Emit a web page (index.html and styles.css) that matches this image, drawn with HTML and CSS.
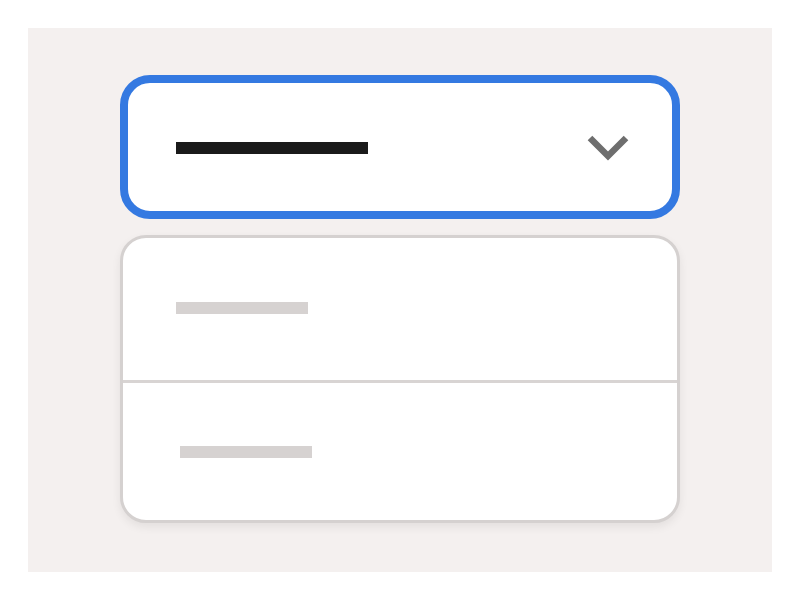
FILE: index.html
```html
<!DOCTYPE html>
<html>
<head>
<meta charset="utf-8">
<link rel="stylesheet" href="styles.css">
</head>
<body>
<div class="panel">
  <div class="select">
    <span class="value-bar"></span>
    <svg class="chevron" width="48" height="32" viewBox="0 0 48 32">
      <polyline points="6,6 24,24 42,6" fill="none" stroke="#6e6e6e" stroke-width="6.5" stroke-linecap="butt" stroke-linejoin="miter"/>
    </svg>
  </div>
  <div class="menu">
    <div class="option first"><span class="opt-bar"></span></div>
    <div class="divider"></div>
    <div class="option second"><span class="opt-bar"></span></div>
  </div>
</div>
</body>
</html>
```
FILE: styles.css
```css
html, body {
  margin: 0;
  padding: 0;
  background: #ffffff;
  font-family: "Liberation Sans", Arial, sans-serif;
}
.panel {
  margin: 28px;
  width: 744px;
  height: 544px;
  box-sizing: border-box;
  background: #f4f0ef;
  padding: 47px 92px 0 92px;
  display: flex;
  flex-direction: column;
  gap: 16px;
}
.select {
  box-sizing: border-box;
  width: 560px;
  height: 144px;
  border: 8px solid #3479e1;
  border-radius: 30px;
  background: #ffffff;
  display: flex;
  align-items: center;
  justify-content: space-between;
  padding: 1px 40px 0 48px;
}
.value-bar {
  display: block;
  width: 192px;
  height: 12px;
  background: #1a1a1a;
}
.chevron {
  display: block;
  margin-top: 0;
}
.menu {
  box-sizing: border-box;
  width: 560px;
  height: 288px;
  border: 3px solid #d5d1d0;
  border-radius: 26px;
  background: #ffffff;
  box-shadow: 0 4px 10px rgba(0,0,0,0.07);
  display: flex;
  flex-direction: column;
  overflow: hidden;
}
.option {
  display: flex;
  align-items: center;
}
.option.first {
  height: 142px;
  padding: 0 0 2px 53px;
  box-sizing: border-box;
}
.option.second {
  height: 137px;
  padding-left: 57px;
}
.divider {
  height: 3px;
  background: #d8d4d3;
}
.opt-bar {
  display: block;
  width: 132px;
  height: 12px;
  background: #d6d2d1;
}
```
